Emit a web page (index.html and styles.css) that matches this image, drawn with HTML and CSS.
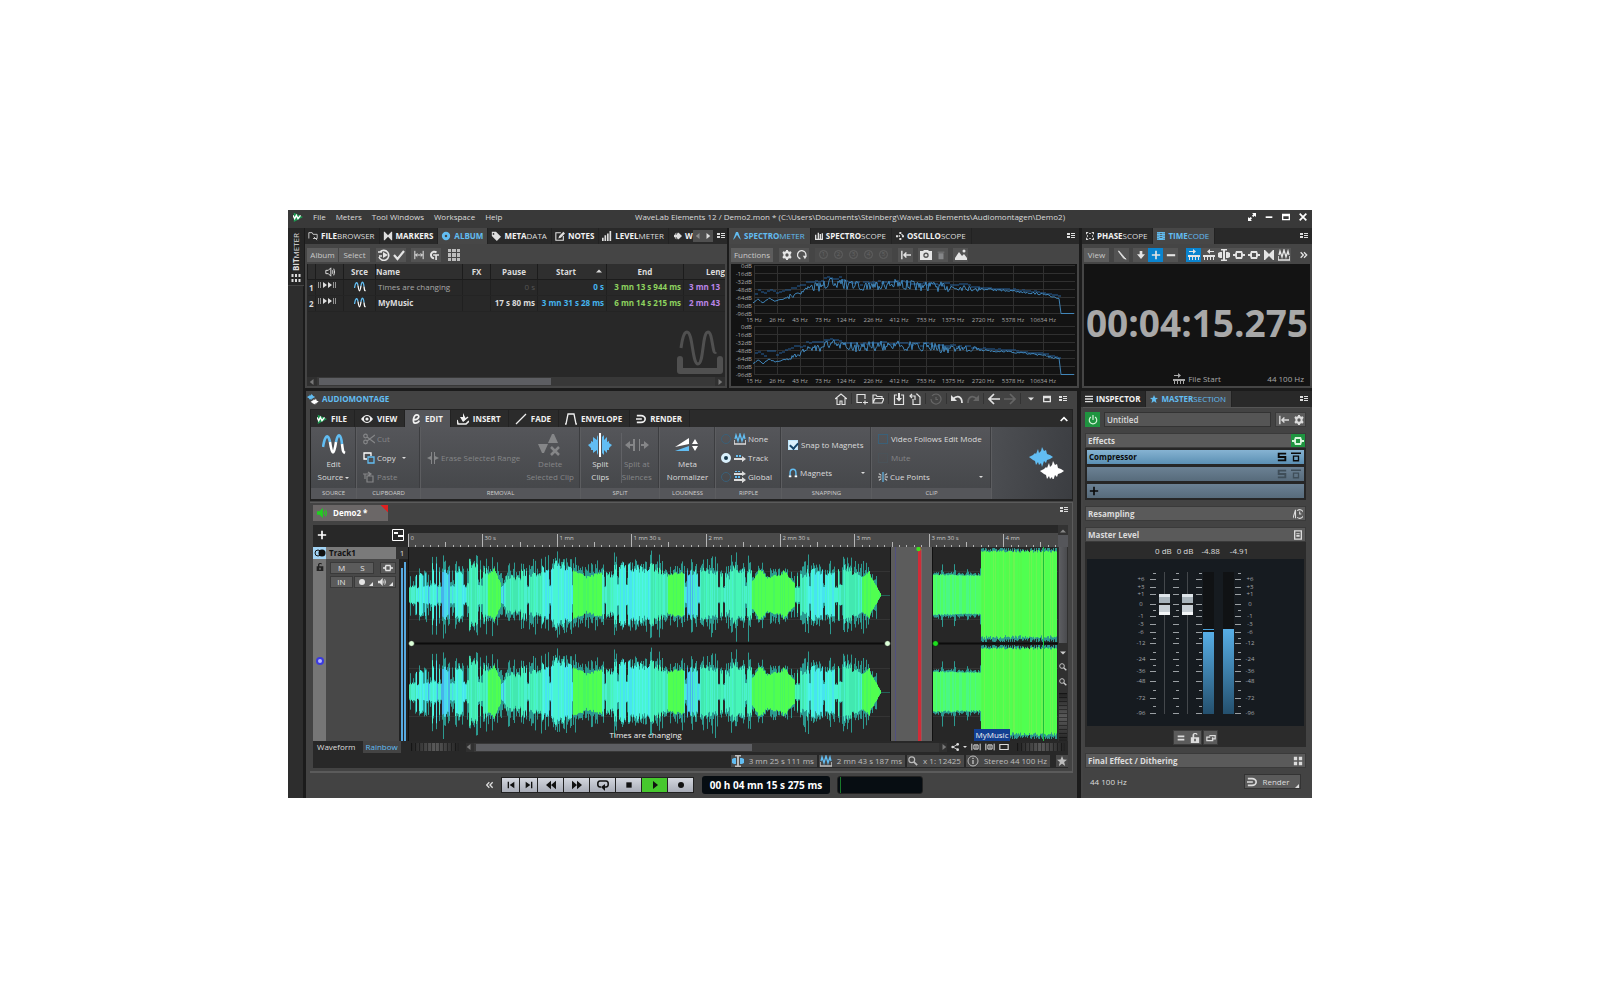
FILE: index.html
```html
<!DOCTYPE html>
<html lang="en">
<head>
<meta charset="utf-8">
<title>WaveLab Elements 12</title>
<link rel="stylesheet" href="styles.css">
</head>
<body>
<svg class="sprite" aria-hidden="true">
  <symbol id="logo" viewBox="0 0 12 12"><path d="M1 1l11 5-11 6z" fill="#1c9a50"/><path d="M0 4l2 4 2-4 2 4 3-4" fill="none" stroke="#fff" stroke-width="1.6"/></symbol>
  <symbol id="grid9" viewBox="0 0 12 12"><path d="M0 0h3v3H0zM4 0h4v3H4zM9 0h3v3H9zM0 4h3v4H0zM4 4h4v4H4zM9 4h3v4H9zM0 9h3v3H0zM4 9h4v3H4zM9 9h3v3H9z" opacity=".75"/></symbol>
  <symbol id="grid6" viewBox="0 0 9 10"><path d="M0 1h2v3H0zM3.500 1h2v3h-2zM7 1h2v3H7zM0 6h2v3H0zM3.500 6h2v3h-2zM7 6h2v3H7z"/></symbol>
  <symbol id="folder" viewBox="0 0 12 12"><path d="M1 9V2h4l1 2h5v5H6M7 7l4 4" fill="none" stroke="currentColor"/></symbol>
  <symbol id="bow" viewBox="0 0 12 12"><path d="M1 1h1l4 4 4-4h1v10h-1L6 7l-4 4H1z"/></symbol>
  <symbol id="disc" viewBox="0 0 12 12"><path fill-rule="evenodd" d="M6 1a5 5 0 110 10A5 5 0 016 1zm0 3.500a1.500 1.500 0 100 3 1.500 1.500 0 000-3z"/></symbol>
  <symbol id="tag" viewBox="0 0 12 12"><path fill-rule="evenodd" d="M1 1h5l6 6-5 5-6-6zM3 2.500a1 1 0 100 2 1 1 0 000-2z"/></symbol>
  <symbol id="note" viewBox="0 0 12 12"><path d="M7 2H1v9h9V6" fill="none" stroke="currentColor" stroke-width="1.300"/><path d="M4 9l1-3 5-5 2 2-5 5z"/></symbol>
  <symbol id="bars" viewBox="0 0 12 12"><path d="M0 8h2v4H0zM3 5h2v7H3zM6 3h2v9H6zM9 0h2v12H9z"/></symbol>
  <symbol id="pulse" viewBox="0 0 12 12"><path d="M0 4h2V2h1v2h1V1h1v2l1-2h1l5 5-5 5H6L5 9v2H4V8H3v2H2V8H0z"/></symbol>
  <symbol id="list" viewBox="0 0 8 8"><path d="M0 1h3v2H0zM0 4h3v2H0zM4 1h4v1H4zM4 3h4v1H4zM4 5h4v1H4z"/></symbol>
  <symbol id="left" viewBox="0 0 8 8"><path d="M6 0v8L1 4z"/></symbol>
  <symbol id="right" viewBox="0 0 8 8"><path d="M2 0v8l5-4z"/></symbol>
  <symbol id="up" viewBox="0 0 8 8"><path d="M0 6h8L4 2z"/></symbol>
  <symbol id="down" viewBox="0 0 8 8"><path d="M0 2h8L4 6z"/></symbol>
  <symbol id="peak" viewBox="0 0 12 12"><path d="M0 12L4.500 0h3L12 12l-3-3L6 4 3 9z"/></symbol>
  <symbol id="scope" viewBox="0 0 12 12"><path d="M0 4h2v6h2V1h2v9h1V3h2v7h1V2h2v10H0z"/></symbol>
  <symbol id="dots" viewBox="0 0 12 12"><path d="M5 0h3v3H5zM0 5h3v3H0zM4 5h2v2H4zM9 5h3v3H9zM5 9h3v3H5zM8 3h2v2H8z"/></symbol>
  <symbol id="gear" viewBox="0 0 12 12"><path fill-rule="evenodd" d="M5 0h2l.5 1.500L9 2.200l1.500-.6 1 1.800L10.300 5v2l1.200 1.500-1 1.800L9 9.800l-1.500.8L7 12H5l-.5-1.400L3 9.800l-1.500.5-1-1.800L1.700 7V5L.5 3.400l1-1.800 1.500.6 1.500-.7zm1 4a2 2 0 100 4 2 2 0 000-4z"/></symbol>
  <symbol id="loop" viewBox="0 0 12 12"><path d="M4 10.500A5 5 0 1110.500 7" fill="none" stroke="currentColor" stroke-width="1.600"/><path d="M7 7h5l-2.500 4z"/></symbol>
  <symbol id="tostart" viewBox="0 0 12 12"><path d="M1 1v10M3 6h9M6.500 3l-3 3 3 3" fill="none" stroke="currentColor" stroke-width="1.700"/></symbol>
  <symbol id="camera" viewBox="0 0 12 12"><path fill-rule="evenodd" d="M0 2h3l1-1h4l1 1h3v9H0zM6 3.500a2.700 2.700 0 100 5.400 2.700 2.700 0 000-5.400z"/><circle cx="6" cy="6.200" r="1.300"/></symbol>
  <symbol id="trash" viewBox="0 0 12 12"><path d="M2 2h8v1H2zM3 4h6v7H3z"/></symbol>
  <symbol id="image" viewBox="0 0 12 12"><path d="M0 11V9l4-6 3 4 2-2 3 4v2z"/><circle cx="9" cy="2" r="1.500"/></symbol>
  <symbol id="phase" viewBox="0 0 12 12"><path d="M0 0h4L0 4zM12 0v4L8 0zM0 12V8l4 4zM12 12H8l4-4zM1 6l2-2v4zM11 6L9 4v4zM6 1L4 3h4zM6 11l2-2H4z"/></symbol>
  <symbol id="film" viewBox="0 0 12 12"><path fill-rule="evenodd" d="M0 0h12v12H0zM1 1v2h1V1zM1 5v2h1V5zM1 9v2h1V9zM10 1v2h1V1zM10 5v2h1V5zM10 9v2h1V9zM4 2v1h4V2zM4 5v1h4V5zM4 8v1h4V8z"/></symbol>
  <symbol id="burger" viewBox="0 0 12 12"><path d="M0 1h12v2H0zM0 5h12v2H0zM0 9h12v2H0z"/></symbol>
  <symbol id="star" viewBox="0 0 12 12"><path d="M6 0l1.700 4.200 4.300.2-3.400 2.800L9.800 12 6 9.200 2.200 12l1.200-4.800L0 4.400l4.300-.2z"/></symbol>
  <symbol id="play-rel" viewBox="0 0 12 12"><path d="M0 3h4M1 7h3M2 3a5 5 0 11-1 5" fill="none" stroke="currentColor" stroke-width="1.600"/><path d="M5 3l5 3-5 3z"/></symbol>
  <symbol id="check" viewBox="0 0 12 12"><path d="M1 6l3.500 4L11 2" fill="none" stroke="currentColor" stroke-width="2.200"/></symbol>
  <symbol id="span" viewBox="0 0 12 12"><path d="M1 1v10M11 1v10M2 6h8M4 4L2 6l2 2M8 4l2 2-2 2" fill="none" stroke="currentColor" stroke-width="1.200"/></symbol>
  <symbol id="ct" viewBox="0 0 12 12"><path d="M9 3a4 4 0 10-3 7" fill="none" stroke="currentColor" stroke-width="2.400"/><path d="M5 5h7v2h-2.500v5h-2V7H5z"/></symbol>
  <symbol id="speaker" viewBox="0 0 12 12"><path d="M1 4h3l3-3v10L4 8H1zM9 4q1 2 0 4M10.500 2q2 4 0 8" fill="none" stroke="currentColor" stroke-width="1.200"/></symbol>
  <symbol id="playcell" viewBox="0 0 18 6"><path d="M0 0h1v6H0zM2 0h1v6H2zM15 0h1v6h-1zM17 0h1v6h-1z" opacity=".6"/><path d="M5 0l4 3-4 3zM10 0l4 3-4 3z"/></symbol>
  <symbol id="sine" viewBox="0 0 24 20"><path d="M1 12C3 0 6-2 8 7" fill="none" stroke="#62bdf2" stroke-width="2.600"/><path d="M8 7c2 14 4 14 6 0" fill="none" stroke="#fff" stroke-width="2.600"/><path d="M14 7c2-10 5-8 6 2" fill="none" stroke="#62bdf2" stroke-width="2.600"/><path d="M20 9c1 8 1 8 3 9" fill="none" stroke="#fff" stroke-width="2.600"/></symbol>
  <symbol id="clip" viewBox="0 0 12 12"><path d="M0 7v4h12V7" fill="none" stroke="currentColor" stroke-width="1.600"/><path d="M1 6l1-4 2 6 2-7 2 7 2-6 1 4" fill="none" stroke="var(--accent, #62bdf2)" stroke-width="1.300"/></symbol>
  <symbol id="nodes" viewBox="0 0 12 12"><path fill-rule="evenodd" d="M0 5h2l1-3h6l1 3h2v2h-2l-1 3H3L2 7H0zM4 4v4h4V4z"/></symbol>
  <symbol id="plus" viewBox="0 0 12 12"><path d="M5 1h2v4h4v2H7v4H5V7H1V5h4z"/></symbol>
  <symbol id="minus" viewBox="0 0 12 12"><path d="M1 5h10v2.500H1z"/></symbol>
  <symbol id="arrowdown" viewBox="0 0 12 12"><path d="M4 0h4v5h4l-6 7-6-7h4z"/></symbol>
  <symbol id="pen" viewBox="0 0 12 12"><path d="M2 1l7 8 2 2-3-1-6-8z" stroke="currentColor"/></symbol>
  <symbol id="rail" viewBox="0 0 12 12"><path d="M0 6h12v2H0zM1 8h1v3H1zM4 8h1v3H4zM7 8h1v3H7zM10 8h1v3h-1zM1 2h4V0l3 2.500L5 5V3H1z"/></symbol>
  <symbol id="caret" viewBox="0 0 12 12"><path d="M3 0h6v1.500H7v9h2V12H3v-1.500h2v-9H3z"/><path fill="var(--accent, #62bdf2)" d="M0 4l2-1h2v6H2L0 8zM12 4l-2-1H8v6h2l2-1z"/></symbol>
  <symbol id="duo" viewBox="0 0 36 32"><path fill="#62bdf2" d="M0 10l4-2 2-2 1 1 2-5 1 4 2-2 1-4 2 4 2-1 1 4 3 1 3 2-3 2-3 1-1 3-2-2-2 6-1-4-2 2-1-3-2 3-1-4-2-1z"/><path fill="#fff" d="M11 24l4-2 2-2 1 1 2-5 1 4 2-2 1-4 2 4 2-1 1 4 3 1 3 2-3 2-3 1-1 3-2-2-2 6-1-4-2 2-1-3-2 3-1-4-2-1z"/></symbol>
  <symbol id="home" viewBox="0 0 12 12"><path d="M0 6l6-5 6 5M2 5v6.500h3V8h2v3.500h3V5" fill="none" stroke="currentColor" stroke-width="1.100"/></symbol>
  <symbol id="new" viewBox="0 0 12 12"><path d="M6 9.500H1v-8h8V6M9 7.500v4M7 9.500h5" fill="none" stroke="currentColor" stroke-width="1.200"/></symbol>
  <symbol id="open" viewBox="0 0 12 12"><path d="M1 10V2h3l1 1.500h5V5M1 10l2-4.500h9L10 10z" fill="none" stroke="currentColor" stroke-width="1.200"/></symbol>
  <symbol id="save" viewBox="0 0 12 12"><path d="M4 2H1.500v9.500h9V2H8" fill="none" stroke="currentColor" stroke-width="1.200"/><path d="M5 0h2v5h2L6 8.500 3 5h2z"/></symbol>
  <symbol id="revert" viewBox="0 0 12 12"><path d="M4 6v5.500h7V4L8 1H7M6 7V3H1M3 1L1 3l2 2" fill="none" stroke="currentColor" stroke-width="1.200"/></symbol>
  <symbol id="clock" viewBox="0 0 12 12"><path d="M2 3a5 5 0 11-1 3M6 4v2.500h2" fill="none" stroke="currentColor" stroke-width="1.200"/></symbol>
  <symbol id="undo" viewBox="0 0 12 12"><path d="M2 6c4-4 9-3 9 4" fill="none" stroke="currentColor" stroke-width="1.800"/><path d="M0 2v6h6z"/></symbol>
  <symbol id="redo" viewBox="0 0 12 12"><path d="M10 6C6 2 1 3 1 10" fill="none" stroke="currentColor" stroke-width="1.800"/><path d="M12 2v6H6z"/></symbol>
  <symbol id="back" viewBox="0 0 12 12"><path d="M12 6H1M6 1L1 6l5 5" fill="none" stroke="currentColor" stroke-width="1.700"/></symbol>
  <symbol id="fwd" viewBox="0 0 12 12"><path d="M0 6h11M6 1l5 5-5 5" fill="none" stroke="currentColor" stroke-width="1.700"/></symbol>
  <symbol id="win" viewBox="0 0 12 12"><path fill-rule="evenodd" d="M0 1h12v10H0zM2 5v4h8V5z"/></symbol>
  <symbol id="cross" viewBox="0 0 12 12"><path d="M1 1l10 10M11 1L1 11" fill="none" stroke="currentColor" stroke-width="2.600"/></symbol>
  <symbol id="expand" viewBox="0 0 12 12"><path d="M6 0h6v6L10 4 8 6 6 4l2-2zM6 12H0V6l2 2 2-2 2 2-2 2z"/></symbol>
  <symbol id="eye" viewBox="0 0 12 12"><path fill-rule="evenodd" d="M0 6q6-8 12 0-6 8-12 0zM6 3a3 3 0 100 6 3 3 0 000-6z"/><circle cx="6" cy="6" r="1.600"/></symbol>
  <symbol id="edit" viewBox="0 0 12 12"><path d="M3 7c7 0 8-6 4-6C3 1 1 11 5 11c2 0 4-1 5-3" fill="none" stroke="currentColor" stroke-width="2"/></symbol>
  <symbol id="insert" viewBox="0 0 12 12"><path d="M0 7l1 4h8l3-3M6 8l5-4" fill="none" stroke="currentColor" stroke-width="1.600"/><path d="M6 0v4H3l3 5 3-3z"/></symbol>
  <symbol id="fade" viewBox="0 0 12 12"><path d="M1 11L11 1" stroke="currentColor" stroke-width="1.300"/></symbol>
  <symbol id="env" viewBox="0 0 12 12"><path d="M0 11h1L3 1h6l2 10h1" fill="none" stroke="currentColor" stroke-width="1.300"/></symbol>
  <symbol id="render" viewBox="0 0 12 12"><path d="M1 2h5c3 0 5 2 5 4s-2 4-5 4H1M0 6h7" fill="none" stroke="currentColor" stroke-width="2"/></symbol>
  <symbol id="cut" viewBox="0 0 12 12"><path d="M4 4l8 6M4 8l8-6" stroke="currentColor" stroke-width="1.200"/><g fill="none" stroke="currentColor" stroke-width="1.200"><circle cx="2.500" cy="3" r="1.800"/><circle cx="2.500" cy="9" r="1.800"/></g></symbol>
  <symbol id="copy" viewBox="0 0 12 12"><path d="M4 7H1V1h7v3" fill="none" stroke="#fff" stroke-width="1.300"/><path d="M5 5h6v6H5z" fill="none" stroke="#62bdf2" stroke-width="1.300"/></symbol>
  <symbol id="paste" viewBox="0 0 12 12"><path d="M4 5h6v6H4zM2 8V3h5M5 1l3 2-3 2M0 3h3" fill="none" stroke="currentColor" stroke-width="1.200"/></symbol>
  <symbol id="erase" viewBox="0 0 12 12"><path d="M5 0v12H4V8L0 6l4-2V0zM7 0v12h1V8l4-2-4-2V0z"/></symbol>
  <symbol id="delete" viewBox="0 0 24 24"><path d="M10 10l4-9h2l4 9zM0 11h10l-4 9H4z"/><path d="M13 14l8 8M21 14l-8 8" stroke="currentColor" stroke-width="2.500"/></symbol>
  <symbol id="split" viewBox="0 0 24 24"><path fill="#62bdf2" d="M0 12l3-2V8l2 1V4l4 3V2l1 2v16l-1 2v-5l-4 3v-3l-2 0v-2zM24 12l-3-2V8l-2 1V4l-3 3V2l-2 2v16l2 2v-5l3 3v-3l2 0v-2z"/><path d="M11 0h2v24h-2z" fill="#fff"/></symbol>
  <symbol id="splitsil" viewBox="0 0 24 12"><path d="M8 0h2v12H8zM14 0h1v12h-1zM0 6l5-4v8zM5 5h3v2H5zM24 6l-5-4v8zM16 5h3v2h-3z"/></symbol>
  <symbol id="meta" viewBox="0 0 24 16"><path d="M0 10L14 1v6z" fill="#fff"/><path d="M0 14l14-5v5z" fill="#62bdf2"/><path d="M17 7l3-5 3 5zM17 9h6l-3 5z" fill="#fff"/></symbol>
  <symbol id="track" viewBox="0 0 12 12"><path d="M0 6h8V4l4 3-4 3V8H0z"/><path d="M2 3h2v2H2zM5 3h2v2H5z" fill="#62bdf2"/></symbol>
  <symbol id="global" viewBox="0 0 12 12"><path d="M0 2h8V0l4 3-4 2V4H0zM0 8h8V6l4 3-4 3v-2H0z"/><path d="M1 0h2v1H1zM4 0h2v1H4zM1 5h2v2H1zM4 5h2v2H4z" fill="#62bdf2"/></symbol>
  <symbol id="magnet" viewBox="0 0 12 12"><path d="M2.500 10V6c0-6 7-6 7 0v4" fill="none" stroke="#62bdf2" stroke-width="1.700"/><path d="M1 9h3v2H1zM8 9h3v2H8z" fill="#fff"/></symbol>
  <symbol id="cue" viewBox="0 0 12 12"><path d="M5.300 0h1.400v12H5.300z" fill="#62bdf2"/><path d="M0 6h4M8 6h4M1 2l3 2M1 10l3-2M11 2L8 4M11 10L8 8" stroke="currentColor" stroke-width="1.300"/></symbol>
  <symbol id="sound" viewBox="0 0 12 12"><path d="M0 4h3l4-4v12L3 8H0z"/><path d="M8.500 4q1 2 0 4M10 2q2.500 4 0 8" fill="none" stroke="currentColor" stroke-width="1.300"/></symbol>
  <symbol id="layout" viewBox="0 0 12 12"><path d="M.5.500h11v11H.5z" fill="none" stroke="currentColor"/><path d="M2 3h4v2H2zM6 6h5v2H6z"/></symbol>
  <symbol id="unlock" viewBox="0 0 12 12"><path fill-rule="evenodd" d="M1 5h2V3c0-4 6-4 6-1H7.500C7 1 5 1 5 3v2h6v7H1zM5 7v3h2V7z"/></symbol>
  <symbol id="link" viewBox="0 0 12 10"><path d="M4 2h7v4H7M8 4v4H1V4h4" fill="none" stroke="currentColor" stroke-width="1.500"/></symbol>
  <symbol id="mag" viewBox="0 0 12 12"><circle cx="4.500" cy="4.500" r="3.500" fill="none" stroke="currentColor" stroke-width="1.400"/><path d="M7 7l4 4" stroke="currentColor" stroke-width="2"/></symbol>
  <symbol id="info" viewBox="0 0 12 12"><circle cx="6" cy="6" r="5" fill="none" stroke="currentColor"/><path d="M5.300 5h1.400v4H5.300zM5.300 2.700h1.400v1.400H5.300z"/></symbol>
  <symbol id="share" viewBox="0 0 12 12"><path d="M10 2L3 6l7 4" fill="none" stroke="currentColor" stroke-width="1.300"/><circle cx="10" cy="2" r="2"/><circle cx="2.500" cy="6" r="2"/><circle cx="10" cy="10" r="2"/></symbol>
  <symbol id="box" viewBox="0 0 12 12"><path d="M1 3h10v6H1z" fill="none" stroke="currentColor" stroke-width="1.400"/></symbol>
  <symbol id="boxes" viewBox="0 0 12 12"><path d="M1 2v8M11 2v8M3.500 3.500h5v5h-5zM6 4v4" fill="none" stroke="currentColor" stroke-width="1.200"/></symbol>
  <symbol id="power" viewBox="0 0 12 12"><path d="M3.500 2.500a4.500 4.500 0 105 0M6 0v6" fill="none" stroke="currentColor" stroke-width="1.400"/></symbol>
  <symbol id="solo" viewBox="0 0 12 12"><path d="M11 2H2v4h8v4H1" fill="none" stroke="currentColor" stroke-width="2.200"/></symbol>
  <symbol id="bypass" viewBox="0 0 12 12"><path d="M0 1.500h12M3 5h6v5.500H3z" fill="none" stroke="currentColor" stroke-width="1.600"/></symbol>
  <symbol id="resample" viewBox="0 0 12 12"><path d="M0 11L3 1v10M5 2a5 5 0 110 8M8 3v3h2" fill="none" stroke="currentColor" stroke-width="1.300"/></symbol>
  <symbol id="fader" viewBox="0 0 12 12"><path d="M2 1h8v10H2z" fill="none" stroke="currentColor" stroke-width="1.600"/><path d="M4 4h4v1H4zM4 6h4v2H4z"/></symbol>
  <symbol id="equals" viewBox="0 0 12 12"><path d="M2 3h8v2H2zM2 7h8v2H2z"/></symbol>
  <symbol id="grid4" viewBox="0 0 12 12"><path d="M1 1h4v4H1zM7 1h4v4H7zM1 7h4v4H1zM7 7h4v4H7z"/></symbol>
  <symbol id="prev" viewBox="0 0 12 12"><path d="M1 1h2v10H1zM11 1v10L4 6z"/></symbol>
  <symbol id="next" viewBox="0 0 12 12"><path d="M9 1h2v10H9zM1 1v10l7-5z"/></symbol>
  <symbol id="rew" viewBox="0 0 12 12"><path d="M6 1v10L0 6zM12 1v10L6 6z"/></symbol>
  <symbol id="ff" viewBox="0 0 12 12"><path d="M0 1v10l6-5zM6 1v10l6-5z"/></symbol>
  <symbol id="cycle" viewBox="0 0 12 12"><path d="M4 8H3C0 8 0 2 3 2h6c3 0 3 6 0 6H7" fill="none" stroke="currentColor" stroke-width="1.500"/><path d="M8 5v7L4 8z"/></symbol>
  <symbol id="stop" viewBox="0 0 12 12"><path d="M2 2h8v8H2z"/></symbol>
  <symbol id="dot" viewBox="0 0 12 12"><circle cx="6" cy="6" r="4.500"/></symbol>
  <symbol id="corner" viewBox="0 0 6 6"><path d="M6 0v6H0z"/></symbol>
  <symbol id="more" viewBox="0 0 12 12"><path d="M1 2l4 4-4 4M6 2l4 4-4 4" fill="none" stroke="currentColor" stroke-width="2"/></symbol>
  <symbol id="less" viewBox="0 0 12 12"><path d="M5 2L1 6l4 4M10 2L6 6l4 4" fill="none" stroke="currentColor" stroke-width="2"/></symbol>
  <symbol id="foldup" viewBox="0 0 12 12"><path d="M1 9l5-5 5 5" fill="none" stroke="#fff" stroke-width="2.500"/></symbol>
  <symbol id="ticks" viewBox="0 0 6 142"><path d="M0 7.500h6M0 15.500h6M0 22.500h6M0 32.500h6M0 44.500h6M0 52.500h6M0 60.500h6M0 71.500h6M0 87.500h6M0 99.500h6M0 109.500h6M0 126.500h6M0 141.500h6M3 1.500h3M3 38.500h3M3 66.500h3M3 80.500h3M3 93.500h3M3 118.500h3M3 134.500h3" stroke="#9a9fa3"/></symbol>
</svg>

<main class="stage">
<div class="window">
  <header class="titlebar">
    <svg class="i i10"><use href="#logo"/></svg>
    <nav class="menus"><button>File</button><button>Meters</button><button>Tool Windows</button><button>Workspace</button><button>Help</button></nav>
    <h1>WaveLab Elements 12 / Demo2.mon * (C:\Users\Documents\Steinberg\WaveLab Elements\Audiomontagen\Demo2)</h1>
    <div class="winbtns">
      <button aria-label="Full screen"><svg class="i i8"><use href="#expand"/></svg></button>
      <button aria-label="Minimize"><svg class="i i8"><use href="#minus"/></svg></button>
      <button aria-label="Maximize"><svg class="i i8"><use href="#win"/></svg></button>
      <button aria-label="Close"><svg class="i i8"><use href="#cross"/></svg></button>
    </div>
  </header>

  <aside class="siderail"><button class="railtab"><span><b>BIT</b>METER</span><svg class="i i10"><use href="#grid6"/></svg></button></aside>

  <div class="top">
    <section class="panel album">
      <div class="tabs">
        <button><svg class="i i10"><use href="#folder"/></svg><b>FILE</b>BROWSER</button>
        <button><svg class="i i10"><use href="#bow"/></svg><b>MARKERS</b></button>
        <button class="on"><svg class="i i10"><use href="#disc"/></svg><b>ALBUM</b></button>
        <button><svg class="i i10"><use href="#tag"/></svg><b>META</b>DATA</button>
        <button><svg class="i i10"><use href="#note"/></svg><b>NOTES</b></button>
        <button><svg class="i i10"><use href="#bars"/></svg><b>LEVEL</b>METER</button>
        <button class="cutoff"><svg class="i i8"><use href="#pulse"/></svg><b>W</b></button>
        <span class="scrollers"><button aria-label="Previous tabs" class="dim"><svg class="i i6"><use href="#left"/></svg></button><button aria-label="Next tabs"><svg class="i i6"><use href="#right"/></svg></button></span>
        <button class="pmenu" aria-label="Panel menu"><svg class="i i8"><use href="#list"/></svg></button>
      </div>
      <div class="toolbar">
        <div class="grp"><button class="txt">Album</button><button class="txt">Select</button></div>
        <div class="grp"><button aria-label="Sync"><svg class="i"><use href="#play-rel"/></svg></button><button aria-label="Validate"><svg class="i"><use href="#check"/></svg></button></div>
        <div class="grp"><button aria-label="Span"><svg class="i i10"><use href="#span"/></svg></button><button aria-label="CD text"><svg class="i i10"><use href="#ct"/></svg></button></div>
        <div class="grp bare"><button aria-label="Columns"><svg class="i"><use href="#grid9"/></svg></button></div>
      </div>
      <div class="tracks">
        <table>
          <colgroup><col class="c-num"><col class="c-spk"><col class="c-src"><col class="c-name"><col class="c-fx"><col class="c-pause"><col class="c-start"><col class="c-end"><col class="c-len"></colgroup>
          <thead><tr><th></th><th><svg class="i i10"><use href="#speaker"/></svg></th><th>Srce</th><th class="l">Name</th><th>FX</th><th>Pause</th><th class="sort">Start<svg class="i i6"><use href="#up"/></svg></th><th>End</th><th>Length</th></tr></thead>
          <tbody>
            <tr><td class="n">1</td><td><svg class="playcell"><use href="#playcell"/></svg></td><td class="c"><svg class="i"><use href="#sine"/></svg></td><td class="soft">Times are changing</td><td></td><td class="r faint">0 s</td><td class="r blue">0 s</td><td class="r green">3 mn 13 s 944 ms</td><td class="violet">3 mn 13</td></tr>
            <tr><td class="n">2</td><td><svg class="playcell"><use href="#playcell"/></svg></td><td class="c"><svg class="i"><use href="#sine"/></svg></td><td>MyMusic</td><td></td><td class="r">17 s 80 ms</td><td class="r blue">3 mn 31 s 28 ms</td><td class="r green">6 mn 14 s 215 ms</td><td class="violet">2 mn 43</td></tr>
          </tbody>
        </table>
        <svg class="watermark" viewBox="0 0 46 44"><path d="M4 18C6 4 8 2 10 2c6 0 5 32 11 32S25 2 31 2c5 0 4 24 8 20" fill="none" stroke="#505050" stroke-width="3"/><path d="M3 29v12h40V29" fill="none" stroke="#505050" stroke-width="6" stroke-linejoin="round" stroke-linecap="round"/></svg>
        <div class="hscroll"><svg class="i i6"><use href="#left"/></svg><div class="track"><i class="thumb albumthumb"></i></div><svg class="i i6"><use href="#right"/></svg></div>
      </div>
    </section>

    <section class="panel spectro">
      <div class="tabs">
        <button class="on"><svg class="i i8"><use href="#peak"/></svg><b>SPECTRO</b>METER</button>
        <button><svg class="i i8"><use href="#scope"/></svg><b>SPECTRO</b>SCOPE</button>
        <button><svg class="i i8"><use href="#dots"/></svg><b>OSCILLO</b>SCOPE</button>
        <button class="pmenu" aria-label="Panel menu"><svg class="i i8"><use href="#list"/></svg></button>
      </div>
      <div class="toolbar">
        <div class="grp"><button class="txt wide">Functions</button></div>
        <div class="grp"><button aria-label="Settings"><svg class="i i10"><use href="#gear"/></svg></button><button aria-label="Reset"><svg class="i i10"><use href="#loop"/></svg></button></div>
        <div class="grp presets"><button disabled>1</button><button disabled>2</button><button disabled>3</button><button disabled>4</button><button disabled>5</button></div>
        <div class="grp"><button aria-label="Back to start"><svg class="i i10"><use href="#tostart"/></svg></button></div>
        <div class="grp"><button aria-label="Snapshot"><svg class="i"><use href="#camera"/></svg></button><button disabled aria-label="Delete snapshot"><svg class="i i10"><use href="#trash"/></svg></button></div>
        <div class="grp"><button aria-label="Image"><svg class="i"><use href="#image"/></svg></button></div>
      </div>
      <svg id="spectrum" class="spectrum" viewBox="0 0 346 122" role="img" aria-label="Spectrum"></svg>
    </section>
  </div>

  <section class="panel timecode">
    <div class="tabs">
      <button><svg class="i i8"><use href="#phase"/></svg><b>PHASE</b>SCOPE</button>
      <button class="on"><svg class="i i8"><use href="#film"/></svg><b>TIME</b>CODE</button>
      <button class="pmenu" aria-label="Panel menu"><svg class="i i8"><use href="#list"/></svg></button>
    </div>
    <div class="toolbar">
      <div class="grp"><button class="txt view">View</button></div>
      <div class="grp"><button aria-label="Pen"><svg class="i i10"><use href="#pen"/></svg></button></div>
      <div class="grp"><button aria-label="Down"><svg class="i i8"><use href="#arrowdown"/></svg></button><button class="lit" aria-label="Plus"><svg class="i i10"><use href="#plus"/></svg></button><button aria-label="Minus"><svg class="i i10"><use href="#minus"/></svg></button></div>
      <div class="grp mono"><button class="lit" aria-label="File start"><svg class="i"><use href="#rail"/></svg></button><button aria-label="File end"><svg class="i flip"><use href="#rail"/></svg></button><button aria-label="Cursor"><svg class="i"><use href="#caret"/></svg></button><button aria-label="Clip start"><svg class="i"><use href="#nodes"/></svg></button><button aria-label="Clip end"><svg class="i"><use href="#nodes"/></svg></button><button aria-label="Marker"><svg class="i"><use href="#bow"/></svg></button><button aria-label="Clip"><svg class="i"><use href="#clip"/></svg></button></div>
      <svg class="i i8 end"><use href="#more"/></svg>
    </div>
    <div class="clockface">
      <output class="bigtime">00:04:15.275</output>
      <div class="clockfoot"><span></span><span class="with-icon"><svg class="i"><use href="#rail"/></svg>File Start</span><span class="rate">44 100 Hz</span></div>
    </div>
  </section>

  <section class="montage">
    <div class="mhead">
      <svg class="i"><use href="#duo"/></svg><h2>AUDIOMONTAGE</h2>
      <div class="tools">
        <button aria-label="Home"><svg class="i"><use href="#home"/></svg></button><i></i>
        <button aria-label="New"><svg class="i"><use href="#new"/></svg></button><button aria-label="Open"><svg class="i"><use href="#open"/></svg></button><i></i>
        <button aria-label="Save"><svg class="i"><use href="#save"/></svg></button><button aria-label="Revert"><svg class="i"><use href="#revert"/></svg></button><i></i>
        <button disabled aria-label="History"><svg class="i"><use href="#clock"/></svg></button><i></i>
        <button aria-label="Undo"><svg class="i"><use href="#undo"/></svg></button><button disabled aria-label="Redo"><svg class="i"><use href="#redo"/></svg></button><i></i>
        <button aria-label="Back"><svg class="i"><use href="#back"/></svg></button><button disabled aria-label="Forward"><svg class="i"><use href="#fwd"/></svg></button><i></i>
        <button aria-label="More"><svg class="i i6"><use href="#down"/></svg></button><button aria-label="Window"><svg class="i i8"><use href="#win"/></svg></button><button aria-label="Menu"><svg class="i i8"><use href="#list"/></svg></button>
      </div>
    </div>

    <div class="ribbon">
      <div class="rtabs">
        <button><svg class="i i10"><use href="#logo"/></svg>FILE</button>
        <button><svg class="i"><use href="#eye"/></svg>VIEW</button>
        <button class="on"><svg class="i i10"><use href="#edit"/></svg>EDIT</button>
        <button><svg class="i"><use href="#insert"/></svg>INSERT</button>
        <button><svg class="i"><use href="#fade"/></svg>FADE</button>
        <button><svg class="i"><use href="#env"/></svg>ENVELOPE</button>
        <button><svg class="i i10"><use href="#render"/></svg>RENDER</button>
        <button class="fold" aria-label="Collapse"><svg class="i i8"><use href="#foldup"/></svg></button>
      </div>
      <div class="groups">
        <fieldset class="g g-source"><div class="gb"><button class="big"><svg class="i i24"><use href="#sine"/></svg>Edit<br>Source <svg class="i i4 drop"><use href="#down"/></svg></button></div><legend>SOURCE</legend></fieldset>
        <fieldset class="g g-clip"><div class="gb col"><button disabled><svg class="i"><use href="#cut"/></svg>Cut</button><button><svg class="i"><use href="#copy"/></svg>Copy<svg class="i i4"><use href="#down"/></svg></button><button disabled><svg class="i"><use href="#paste"/></svg>Paste</button></div><legend>CLIPBOARD</legend></fieldset>
        <fieldset class="g g-rem"><div class="gb"><button disabled><svg class="i"><use href="#erase"/></svg>Erase Selected Range</button><button class="big" disabled><svg class="i i24"><use href="#delete"/></svg>Delete<br>Selected Clip</button></div><legend>REMOVAL</legend></fieldset>
        <fieldset class="g g-split"><div class="gb"><button class="big"><svg class="i i24"><use href="#split"/></svg>Split<br>Clips</button><button class="big rule" disabled><svg class="i i24"><use href="#splitsil"/></svg>Split at<br>Silences</button></div><legend>SPLIT</legend></fieldset>
        <fieldset class="g g-loud"><div class="gb"><button class="big"><svg class="i i24"><use href="#meta"/></svg>Meta<br>Normalizer</button></div><legend>LOUDNESS</legend></fieldset>
        <fieldset class="g g-rip"><div class="gb col"><label><input type="radio" name="ripple"><svg class="i"><use href="#clip"/></svg>None</label><label><input type="radio" name="ripple" checked><svg class="i"><use href="#track"/></svg>Track</label><label><input type="radio" name="ripple"><svg class="i"><use href="#global"/></svg>Global</label></div><legend>RIPPLE</legend></fieldset>
        <fieldset class="g g-snap"><div class="gb col two"><label><input type="checkbox" checked>Snap to Magnets</label><button><svg class="i i10"><use href="#magnet"/></svg>Magnets<svg class="i i4 end"><use href="#down"/></svg></button></div><legend>SNAPPING</legend></fieldset>
        <fieldset class="g g-cue"><div class="gb col"><label><input type="checkbox">Video Follows Edit Mode</label><label class="off"><input type="checkbox" disabled>Mute</label><button><svg class="i i10"><use href="#cue"/></svg>Cue Points<svg class="i i4 end"><use href="#down"/></svg></button></div><legend>CLIP</legend></fieldset>
        <div class="brand"><svg><use href="#duo"/></svg></div>
      </div>
    </div>

    <div class="editor">
      <div class="files"><button class="file"><svg class="i i10"><use href="#sound"/></svg>Demo2 *</button><button class="pmenu" aria-label="Menu"><svg class="i i8"><use href="#list"/></svg></button></div>
      <div class="work">
        <div class="corner"><button aria-label="Add track"><svg class="i i10"><use href="#plus"/></svg></button><button aria-label="Track layout"><svg class="i"><use href="#layout"/></svg></button></div>
        <svg id="ruler" class="ruler" viewBox="0 0 650 14"></svg>
        <div class="vtop"><svg class="i i6"><use href="#up"/></svg></div>

        <div class="thead">
          <div class="tname"><span class="tog"><svg viewBox="0 0 12 8"><circle cx="4" cy="4" r="3" fill="none" stroke="#111"/><circle cx="8" cy="4" r="3.500" fill="#111"/></svg></span><b>Track1</b><span class="tno">1</span></div>
          <div class="tbody">
            <div class="tside"><svg class="i i8"><use href="#unlock"/></svg><span class="knob"></span></div>
            <div class="tctl">
              <div><span class="pair"><button>M</button><button>S</button></span><span class="pair"><button aria-label="Effects"><svg class="i i10"><use href="#nodes"/></svg></button></span></div>
              <div><span class="pair"><button>IN</button></span><span class="pair"><button aria-label="Record"><svg class="i i8"><use href="#dot"/></svg></button><svg class="i i4"><use href="#corner"/></svg><button aria-label="Monitor"><svg class="i i8"><use href="#sound"/></svg></button><svg class="i i4"><use href="#corner"/></svg></span></div>
            </div>
            <div class="tmeter"><i></i><i></i></div>
          </div>
        </div>
        <div class="lane">
          <svg id="wave" viewBox="0 0 650 194" preserveAspectRatio="none" role="img" aria-label="Waveform"></svg>
          <span class="clipname first">Times are changing</span><span class="clipname second">MyMusic</span>
        </div>
        <div class="vbar"><i class="vthumb"></i><svg class="i i6"><use href="#down"/></svg><svg class="i i8"><use href="#mag"/></svg><svg class="i i8"><use href="#mag"/></svg><span class="jog v"></span></div>

        <div class="lower">
          <button>Waveform</button><button class="on">Rainbow</button><span class="jog"></span>
          <div class="hscroll"><svg class="i i6"><use href="#left"/></svg><div class="track"><i class="thumb wavethumb"></i></div><svg class="i i6"><use href="#right"/></svg></div>
          <svg class="i i8"><use href="#share"/></svg><svg class="i i4"><use href="#down"/></svg><svg class="i i10"><use href="#boxes"/></svg><svg class="i i10"><use href="#boxes"/></svg><svg class="i i10"><use href="#box"/></svg><span class="jog last"></span>
        </div>
      </div>
      <div class="status">
        <span><svg class="i"><use href="#caret"/></svg>3 mn 25 s 111 ms</span><span><svg class="i"><use href="#clip"/></svg>2 mn 43 s 187 ms</span><span><svg class="i i10"><use href="#mag"/></svg>x 1: 12425</span><span><svg class="i"><use href="#info"/></svg>Stereo 44 100 Hz</span><button aria-label="Favorite"><svg class="i i10"><use href="#star"/></svg></button>
      </div>
    </div>

    <div class="transport">
      <svg class="i i8"><use href="#less"/></svg>
      <div class="keys">
        <button class="half" aria-label="Previous"><svg class="i i8"><use href="#prev"/></svg></button><button class="half" aria-label="Next"><svg class="i i8"><use href="#next"/></svg></button><button aria-label="Rewind"><svg class="i i10"><use href="#rew"/></svg></button><button aria-label="Forward"><svg class="i i10"><use href="#ff"/></svg></button><button aria-label="Loop"><svg class="i"><use href="#cycle"/></svg></button><button aria-label="Stop"><svg class="i i8"><use href="#stop"/></svg></button><button class="go" aria-label="Play"><svg class="i i8"><use href="#right"/></svg></button><button aria-label="Record"><svg class="i i8"><use href="#dot"/></svg></button>
      </div>
      <output class="pos">00 h 04 mn 15 s 275 ms</output>
      <span class="lvl"></span>
    </div>
  </section>

  <section class="panel master">
    <div class="tabs">
      <button><svg class="i i8"><use href="#burger"/></svg><b>INSPECTOR</b></button>
      <button class="on"><svg class="i i8"><use href="#star"/></svg><b>MASTER</b>SECTION</button>
      <button class="pmenu" aria-label="Panel menu"><svg class="i i8"><use href="#list"/></svg></button>
    </div>
    <div class="mbody">
      <div class="preset"><button class="pwr" aria-label="Power"><svg class="i i10"><use href="#power"/></svg></button><button class="pname">Untitled</button><span class="pair"><button aria-label="Reset"><svg class="i i10"><use href="#tostart"/></svg></button><button aria-label="Settings"><svg class="i i10"><use href="#gear"/></svg></button></span></div>
      <div class="effects">
        <div class="bar">Effects<button class="fxon" aria-label="Effects on"><svg class="i"><use href="#nodes"/></svg></button></div>
        <ul>
          <li class="hot">Compressor<span><svg class="i i10"><use href="#solo"/></svg><svg class="i i10"><use href="#bypass"/></svg></span></li>
          <li><span class="ghost"><svg class="i i10"><use href="#solo"/></svg><svg class="i i10"><use href="#bypass"/></svg></span></li>
          <li><svg class="i i10"><use href="#plus"/></svg></li>
        </ul>
      </div>
      <div class="bar">Resampling<svg class="i i10"><use href="#resample"/></svg></div>
      <div class="levels">
        <div class="bar">Master Level<svg class="i i10"><use href="#fader"/></svg></div>
        <div class="dbs"><span>0 dB</span><span>0 dB</span><span>-4.88</span><span>-4.91</span></div>
        <div class="mixer">
          <svg class="scale" viewBox="0 0 12 142"></svg>
          <svg class="tk"><use href="#ticks"/></svg>
          <input type="range" value="82" aria-label="Left level">
          <svg class="tk"><use href="#ticks"/></svg>
          <input type="range" value="82" aria-label="Right level">
          <svg class="tk"><use href="#ticks"/></svg>
          <span class="vu"></span><span class="vu two"></span>
          <svg class="tk"><use href="#ticks"/></svg>
          <svg class="scale" viewBox="0 0 12 142"></svg>
        </div>
        <div class="lockrow"><span class="pair"><button aria-label="Equal"><svg class="i i10"><use href="#equals"/></svg></button><button aria-label="Unlock"><svg class="i i10"><use href="#unlock"/></svg></button></span><span class="pair"><button aria-label="Link"><svg class="i i10"><use href="#link"/></svg></button></span></div>
      </div>
      <div class="bar">Final Effect / Dithering<svg class="i i10"><use href="#grid4"/></svg></div>
      <div class="mfoot"><span>44 100 Hz</span><button><svg class="i i10"><use href="#render"/></svg>Render<svg class="i i4 tri"><use href="#corner"/></svg></button></div>
    </div>
  </section>
</div>
</main>
<script src="script.js"></script>
</body>
</html>
```
FILE: styles.css
```css
* { box-sizing: border-box; }
body { margin: 0; background: #fff; font: 8px/12px "Open Sans", "Noto Sans", sans-serif; color: #dcdcdc; }
button { appearance: none; border: 0; margin: 0; padding: 0; background: none; font: inherit; color: inherit; display: flex; align-items: center; justify-content: center; gap: 3px; white-space: nowrap; }
button:disabled, .off { color: #858688; }
h1, h2 { margin: 0; font-size: 8px; font-weight: 400; }
fieldset { border: 0; margin: 0; padding: 0; min-width: 0; }
.sprite { position: absolute; width: 0; height: 0; }
svg { display: block; flex: none; }
.i { width: 12px; height: 12px; fill: currentColor; }
.i10 { width: 10px; height: 10px; }
.i8 { width: 8px; height: 8px; }
.i6 { width: 6px; height: 6px; }
.i4 { width: 4px; height: 4px; }
.i24 { width: 24px; height: 24px; }
.flip { transform: scaleX(-1); }
.end { margin-left: auto; }

.stage { padding: 210px 18% 0; }
.window { display: grid; grid-template-columns: 16px minmax(0, 1fr) 233px; grid-template-rows: auto auto auto; background: #1b1b1b; }
.titlebar { grid-column: 1 / -1; display: grid; grid-template-columns: 10px 1fr auto 232px; align-items: center; gap: 10px; height: 18px; padding: 0 5px 4px; background: #393939; }
.menus { display: flex; gap: 10px; }
.winbtns { display: flex; gap: 9px; justify-content: flex-end; color: #fff; }

.siderail { grid-row: span 2; background: #2d2d2d; border-right: 1px solid #1b1b1b; }
.railtab { width: 16px; height: 58px; flex-direction: column; gap: 2px; padding-top: 3px; border-bottom: 1px solid #444; background: #262626; }
.railtab span { writing-mode: vertical-rl; transform: rotate(180deg); line-height: 8px; }

.top { display: grid; grid-template-columns: minmax(0, 422fr) minmax(0, 350fr); gap: 2px; padding: 0 0 3px 1px; }
.panel { min-width: 0; background: #2a2a2a; border: solid #454545; border-width: 0 2px 2px; }
.tabs { display: flex; height: 16px; margin: 0 -2px; background: #292929; color: #dedede; }
.tabs button { gap: 0; padding: 0 5px 0 4px; border-right: 1px solid #222; }
.tabs .i { margin-right: 3px; }
.tabs .on { background: #474747; color: #62bdf2; }
.tabs b { color: #f2f2f2; }
.tabs .on b { color: #62bdf2; }
.scrollers { display: flex; margin: 2px 0; background: #505050; }
.album .tabs button { padding: 0 4px 0 3px; }
.album .tabs .cutoff { padding: 0 0 0 5px; border: 0; }
.tabs .scrollers button { width: 10px; padding: 0; border: 0; }
.scrollers .dim { color: #8a8a8a; }
.tabs .scrollers .i, .tabs .pmenu .i { margin: 0; }
.tabs .pmenu, .album .tabs .pmenu { margin-left: auto; padding: 0 4px; border: 0; }
.toolbar { display: flex; align-items: center; gap: 5px; height: 20px; padding-top: 1px; background: #454545; color: #e4e4e4; }
.grp { display: flex; height: 14px; background: #535353; }
.grp button { width: 15px; }
.grp .txt { width: 32px; background: #5c5c5c; border-right: 1px solid #454545; color: #c9c9c9; }
.grp .wide { width: 43px; }
.grp .view { width: 26px; }
.grp.bare { background: none; }
.presets { background: #4a4a4a; padding: 0 1px; margin: 0 1px; }
.presets button { width: 9px; height: 9px; margin: 2px 3px; border: 1px solid #606060; border-radius: 50%; font-size: 6px; color: #656565; }
.grp .lit { background: #0a84cf; }
.mono { --accent: currentColor; margin-left: 4px; }
.timecode .toolbar { padding-right: 0; gap: 4px; }
.timecode .end { margin-right: 2px; }

.tracks { position: relative; height: 122px; overflow: hidden; background: #282828; }
.tracks table { width: 419px; border-collapse: collapse; table-layout: fixed; font-weight: 700; }
.c-num { width: 8px; } .c-spk { width: 28px; } .c-src { width: 32px; } .c-name { width: 87px; } .c-fx { width: 28px; }
.c-pause { width: 47px; } .c-start { width: 69px; } .c-end { width: 77px; } .c-len { width: 43px; }
th, td { padding: 0; white-space: nowrap; overflow: hidden; border-right: 1px solid #202020; }
th { height: 15px; padding-top: 1px; background: #2f2f2f; border: 1px solid #1c1c1c; border-top: 0; font-weight: 700; position: relative; }
th:last-child { padding-left: 22px; }
th .i { margin: 0 auto; }
th.sort { padding-right: 12px; }
.sort .i { position: absolute; right: 4px; top: 4px; }
th.l { text-align: left; }
td { height: 16px; padding: 0 2px; border-bottom: 1px solid #242424; }
td.n { padding: 2px 0 0; text-align: center; }
td.r { text-align: right; }
td.c .i { margin: 0 auto; }
.playcell { width: 18px; height: 6px; margin-bottom: 4px; fill: #ddd; }
td.soft { color: #a9a9a9; font-weight: 400; }
td.faint { color: #555; font-weight: 400; }
.blue { color: #45b4ee; } .green { color: #8ed35f; } .violet { color: #bb86e8; }
td.violet { padding-left: 5px; }
.watermark { position: absolute; right: 2px; bottom: 12px; width: 46px; height: 44px; }
.hscroll { display: flex; align-items: center; flex: 1; height: 9px; background: #303030; color: #777; }
.tracks .hscroll { position: absolute; left: 0; right: 0; bottom: 0; padding: 0 2px; }
.track { flex: 1; height: 9px; padding: 1px 2px; margin: 0 2px; background: #383838; }
.thumb { display: block; height: 7px; background: #5d5e62; }
.albumthumb { width: 59%; }
.wavethumb { width: 60%; }

.spectrum { width: 100%; background: #131313; }
.spectrum text { font-size: 6px; fill: #a8a8a8; }
.clockface { display: flex; flex-direction: column; height: 122px; background: #131313; }
.bigtime { flex: 1; padding-top: 37px; font-size: 37px; line-height: 44px; font-weight: 700; color: #a8a8a8; text-align: center; }
.clockfoot { display: grid; grid-template-columns: 1fr auto 1fr; gap: 5px; padding: 0 6px; color: #a8a8a8; height: 13px; }
.rate { text-align: right; }
.with-icon { display: flex; gap: 3px; }
.timecode { margin: 0 0 3px 3px; }

.montage { min-width: 0; margin: 0 2px; padding: 0 4px; background: #434343; }
.mhead { display: flex; align-items: center; gap: 3px; height: 18px; padding-bottom: 3px; margin-left: -3px; color: #62bdf2; }
.mhead h2 { font-weight: 700; }
.tools { display: flex; align-items: center; gap: 4px; margin-left: auto; margin-right: 4px; color: #e2e2e2; }
.tools > i { width: 1px; height: 11px; background: #333; }
.tools button:nth-last-child(-n+3) { width: 12px; }
.tools button:disabled { color: #666; }
.ribbon { border: 1px solid #222; border-bottom-width: 2px; }
.rtabs { display: flex; height: 17px; background: #2b2b2b; color: #f0f0f0; font-weight: 700; }
.rtabs button { gap: 4px; padding: 0 7px 0 6px; border-right: 1px solid #222; }
.rtabs .on { background: #55565a; }
.rtabs .fold { margin-left: auto; border: 0; padding: 0 4px; }
.groups { display: flex; background: linear-gradient(#55565a, #434548); }
.g { display: flex; flex-direction: column; border-right: 1px solid #5c5d60; box-shadow: inset -1px 0 #3c3d40; }
.g legend { order: 2; float: left; width: 100%; height: 11px; padding: 0; background: #55565a; color: #cfcfcf; font-size: 6px; line-height: 10px; text-align: center; }
.gb { display: flex; height: 61px; padding: 6px 3px 5px; justify-content: space-around; align-items: center; }
.gb.col { flex-direction: column; align-items: stretch; justify-content: space-between; }
.gb.two { padding: 12px 6px 9px; }
.gb button, .gb label { gap: 2px; justify-content: flex-start; }
.gb label { display: flex; align-items: center; white-space: nowrap; }
.gb .big { display: block; align-self: stretch; line-height: 13px; text-align: center; }
.big .i { margin: 0 auto; }
.big .drop { display: inline-block; }
.rule { border-left: 1px solid #616266; }
.g-source { width: 46px; } .g-clip { width: 64px; } .g-rem { width: 160px; } .g-split { width: 79px; }
.g-loud { width: 56px; } .g-rip { width: 66px; } .g-snap { width: 90px; } .g-cue { width: 120px; }
.g-clip .gb { padding-left: 6px; }
.g-rip .gb { padding-left: 5px; }
.g-cue .gb { padding: 6px 8px 5px 6px; }
.g-clip .i4 { margin-left: 4px; }
.brand { flex: 1; display: flex; align-items: center; justify-content: flex-end; padding-right: 7px; background: linear-gradient(100deg, #4d4f53, #3b3d41); }
.brand svg { width: 36px; height: 32px; }
input[type=radio], input[type=checkbox] { appearance: none; flex: none; width: 10px; height: 10px; margin: 0 1px 0 0; border: 1px solid #3a6078; }
input[type=radio] { border-radius: 50%; }
input[type=radio]:checked { border: 3px solid #d9f0fc; background: #17384c; }
input[type=checkbox]:checked { border: 1px solid #bfe6fb; background: #d9f0fc; }
input[type=checkbox]:checked::after { content: ""; display: block; width: 4px; height: 6px; margin-left: 2px; border: solid #16466a; border-width: 0 2px 2px 0; transform: rotate(42deg); }
.gb input:disabled { border-color: #4a5258; }

.editor { margin-top: 1px; padding: 2px 4px 3px 3px; border: solid #5b5b5b; border-width: 1px 1px 2px 0; background: #434343; }
.files { display: flex; justify-content: space-between; height: 20px; padding-bottom: 4px; }
.file { width: 75px; justify-content: flex-start; padding-left: 4px; gap: 6px; font-weight: 700; color: #fff; background: linear-gradient(225deg, #d22 5px, #6b6767 5px); }
.file .i { color: #20d020; }
.files .pmenu { align-self: flex-start; padding-top: 1px; }
.work { display: grid; grid-template-columns: 95px minmax(0, 1fr) 10px; background: #282828; }
.corner { display: flex; justify-content: space-between; align-items: center; height: 22px; padding: 0 4px; color: #fff; }
.corner button { padding-bottom: 2px; }
.ruler { width: 100%; align-self: end; background: #4a4a4a; }
.ruler text { font-size: 6px; fill: #ccc; }
.vtop { display: flex; justify-content: center; padding-top: 3px; color: #888; background: linear-gradient(#333 10px, #55565a 10px); }
.thead { display: flex; flex-direction: column; }
.tname { display: flex; height: 12px; line-height: 12px; background: #7a7a7a; color: #111; }
.tog { width: 13px; padding: 2px 0 0 1px; background: #a3d4f5; }
.tog svg { width: 12px; height: 8px; }
.tname b { padding-left: 3px; flex: 1; }
.tno { width: 12px; background: #333; color: #ddd; text-align: center; }
.tbody { display: flex; flex: 1; background: #484848; }
.tside { display: flex; flex-direction: column; justify-content: space-between; align-items: center; width: 13px; padding: 4px 0 76px; background: #767676; color: #222; }
.knob { width: 8px; height: 8px; border: 2px solid #3a3ae0; border-radius: 50%; background: #b5b5ff; }
.tctl { flex: 1; padding: 3px 3px 0 4px; color: #e4e4e4; }
.tctl > div { display: flex; justify-content: space-between; margin-bottom: 2px; }
.pair { display: flex; align-items: center; background: #5b5b5b; border: 1px solid #3a3a3a; }
.tctl .pair { height: 12px; }
.tctl button { width: 14px; }
.tctl .pair:first-child button { width: 21px; }
.tctl .i4 { align-self: flex-end; margin: 0 2px 1px 0; }
.tmeter { display: flex; gap: 1px; width: 9px; padding: 3px 2px 0; background: #222; }
.tmeter i { width: 3px; background: #57a8df; }
.tmeter i:first-child { margin-top: 6px; }
.lane { position: relative; }
.lane > svg { width: 100%; height: 194px; }
.clipname { position: absolute; bottom: 0; color: #f2f2f2; }
.first { left: 31%; }
.second { left: 87%; padding: 0 2px; background: #123f92; }
.vbar { display: flex; flex-direction: column; align-items: center; gap: 7px; background: #303030; color: #ccc; }
.vthumb { width: 8px; height: 96px; background: linear-gradient(90deg, #5d5e62, #4a4b4e); }
.jog { width: 48px; height: 8px; margin: 0 3px 0 6px; background: repeating-linear-gradient(90deg, #0006 0 1px, #0000 1px 4px), linear-gradient(90deg, #222, #5a5a5a, #222); }
.jog.v { width: 8px; height: 48px; margin: 0; background: repeating-linear-gradient(#0006 0 1px, #0000 1px 4px), linear-gradient(#222, #5a5a5a, #222); }
.jog.last { margin-left: 4px; }
.lower { grid-column: 1 / -1; display: flex; align-items: center; gap: 4px; height: 12px; color: #ddd; }
.lower button { padding: 0 3px; margin-left: 1px; }
.lower button.on { margin: 0; background: #444; color: #62bdf2; }
.status { display: flex; justify-content: flex-end; gap: 2px; height: 15px; padding: 2px 0 1px; background: #282828; color: #bdbdbd; }
.status > * { display: flex; align-items: center; gap: 5px; padding: 0 3px 0 1px; background: #484848; }
.status button { margin-left: 4px; padding: 0 1px; }

.transport { display: flex; align-items: center; justify-content: center; gap: 7px; height: 25px; padding: 0 0 2px 26px; }
.keys { display: flex; gap: 1px; height: 16px; margin-right: 1px; color: #111; border: 1px solid #222; background: #222; }
.keys button { width: 25px; background: linear-gradient(#d3d6de, #a9adb8); }
.keys .half { width: 17px; }
.keys .go { background: #46c82e; }
.pos { width: 128px; height: 18px; border-radius: 3px; background: #070d12; font-size: 10px; line-height: 18px; font-weight: 700; text-align: center; color: #fff; }
.lvl { width: 86px; height: 18px; border: 1px solid #222; border-radius: 3px; background: linear-gradient(90deg, #070d12 2px, #19782a 2px 3px, #070d12 3px); }

.master { margin-left: 2px; background: #434343; }
.mbody { display: flex; flex-direction: column; gap: 6px; padding: 4px 4px 4px 2px; border-top: 1px solid #555; }
.preset { display: flex; gap: 4px; height: 15px; }
.pwr, .fxon { width: 15px; height: 15px; background: #1f9440; color: #d8f5dc; }
.pname { flex: 1; justify-content: flex-start; padding-left: 2px; border: 1px solid #333; background: #555; font-weight: 600; }
.preset .pair { width: 31px; gap: 5px; padding: 0 3px; justify-content: space-between; }
.bar { display: flex; justify-content: space-between; align-items: center; height: 15px; padding: 0 2px; border: 1px solid #3a3a3a; background: #5a5a5a; font-weight: 700; }
.fxon { width: 14px; height: 13px; margin-right: -2px; }
.effects { background: #262626; }
.effects ul { display: grid; gap: 3px; margin: 0; padding: 2px 2px 2px; list-style: none; }
.effects li { display: flex; align-items: center; justify-content: space-between; height: 14px; padding: 0 3px 0 2px; background: linear-gradient(#6b8194, #576b7b); color: #0a0a0a; font-weight: 700; }
.effects li span { display: flex; gap: 4px; margin-left: auto; }
.effects .hot { background: linear-gradient(#86b3d2, #5b8fb3); }
.effects li .ghost { color: #3f4e59; }
.levels { background: #2b2b2b; }
.dbs { display: flex; gap: 5px; padding: 3px 0 2px 70px; }
.dbs span:nth-child(n+3) { margin-left: 3px; }
.dbs span:last-child { margin-left: 5px; }
.mixer { display: flex; justify-content: center; gap: 3px; height: 167px; margin: 0 2px; padding-top: 13px; background: #161b20; }
.scale { width: 12px; height: 142px; overflow: visible; }
.scale text { font-size: 6px; fill: #a5a9ad; text-anchor: middle; }
.tk { width: 6px; height: 142px; }
.mixer input { appearance: none; writing-mode: vertical-lr; direction: rtl; width: 11px; height: 142px; margin: 0; background: linear-gradient(90deg, #0000 5px, #44484c 5px 6px, #0000 6px); }
.mixer input::-webkit-slider-thumb { appearance: none; width: 11px; height: 21px; background: linear-gradient(#dfe5ea 0 3px, #a9b4bc 3px 9px, #222 9px 11px, #c9d0d6 11px 18px, #f4f6f8 18px); }
.vu { width: 11px; height: 142px; margin-left: -2px; background: linear-gradient(#101214 57px, #4ba3dc 57px 58px, #111 58px 60px, #57aee6 60px, #24506e); }
.vu.two { margin-left: 6px; margin-right: -2px; background: linear-gradient(#101214 57px, #57aee6 57px, #24506e); }
.lockrow { display: flex; justify-content: center; gap: 1px; padding: 4px 0 2px; }
.lockrow .pair { height: 15px; gap: 4px; padding: 0 1px 0 2px; }
.mfoot { display: flex; justify-content: space-between; align-items: center; height: 15px; padding: 0 5px; }
.mfoot button { width: 57px; height: 15px; justify-content: space-between; padding: 0 1px 0 2px; border: 1px solid #333; background: #5a5a5a; }
.tri { align-self: flex-end; }
```
FILE: script.js
```js
// Repeatable pseudo-random source, so that the demo signal never changes.
let seed = 7;
const rnd = () => (seed = (seed * 16807) % 2147483647) / 2147483647;

// Meter scale captions.
const scale = [["+6", 7], ["+3", 15], ["+1", 22], ["0", 32], ["-1", 44], ["-3", 52], ["-6", 60], ["-12", 71], ["-24", 87], ["-36", 99], ["-48", 109], ["-72", 126], ["-96", 141]];
for (const s of document.querySelectorAll(".scale"))
  s.innerHTML = scale.map(([t, y]) => `<text x="6" y="${y + 2}">${t}</text>`).join("");

// Time ruler.
const times = ["0", "30 s", "1 mn", "1 mn 30 s", "2 mn", "2 mn 30 s", "3 mn", "3 mn 30 s", "4 mn"];
let r = "";
for (let k = 0; k < 88; k++) {
  const x = Math.round(k * 7.44) + 0.5;
  const h = k % 10 === 0 ? 13 : k % 5 === 0 ? 5 : 2;
  r += `<path d="M${x} 14v${-h}" stroke="#b5b5b5"/>`;
  if (k % 10 === 0) r += `<text x="${x + 2}" y="7">${times[k / 10]}</text>`;
}
document.getElementById("ruler").innerHTML = r;

// Spectrum: two channels.
const freqs = [["15 Hz", 23], ["26 Hz", 46], ["43 Hz", 69], ["73 Hz", 92], ["124 Hz", 115], ["226 Hz", 142], ["412 Hz", 168], ["753 Hz", 195], ["1375 Hz", 222], ["2720 Hz", 252], ["5378 Hz", 282], ["10634 Hz", 312]];
const curve = [[22, 38], [27, 34], [32, 38], [38, 33], [44, 36], [52, 34], [60, 31], [69, 28], [76, 22], [86, 22], [98, 18], [110, 19], [125, 21], [145, 20], [165, 19], [190, 21], [215, 22], [250, 24], [282, 26], [310, 29], [328, 33]];
const at = (pts, x) => {
  let i = 1;
  while (i < pts.length - 1 && pts[i][0] < x) i++;
  const [a, b] = [pts[i - 1], pts[i]];
  return a[1] + (b[1] - a[1]) * Math.min(1, Math.max(0, (x - a[0]) / (b[0] - a[0])));
};
let sp = "";
for (const top of [1, 62]) {
  for (let i = 0; i < 7; i++) {
    const y = top + i * 8 + 0.5;
    sp += `<path d="M23 ${y}H344" stroke="#303030"/><text x="21" y="${y + 2}" text-anchor="end">${i ? -16 * i : 0}dB</text>`;
  }
  for (const [t, x] of freqs)
    sp += `<path d="M${x}.5 ${top}v49" stroke="#303030"/><text x="${x}" y="${top + 57}" text-anchor="middle">${t}</text>`;
  let line = "", dash = "";
  for (let x = 22; x <= 328; x++) {
    const n = x < 55 ? 1 : x < 80 ? 5 : x < 220 ? 10 : x < 250 ? 6 : 2;
    const y = at(curve, x);
    line += `${x === 22 ? "M" : "L"}${x} ${(top + y + (rnd() - 0.5) * n).toFixed(1)}`;
    if (x % 3 === 0) dash += `M${x} ${Math.round(top + y - (x < 70 ? 7 : x < 110 ? 4 : 1) - rnd() * (x < 240 ? 3 : 1))}h3`;
  }
  sp += `<path d="${dash}" stroke="#27619b" fill="none"/><path d="${line}L330 ${top + 48}.5H343" stroke="#438fc7" fill="none" stroke-width=".9"/>`;
}
document.getElementById("spectrum").innerHTML = sp;

// Rainbow waveform. Each entry: start, end, height at start, height at end, hue family.
const C = { t: ["#46f5b8", "#4af0cf", "#42e8b0"], c: ["#4ef2ea", "#46e4f0", "#48f5d2"], b: ["#46b4ea", "#4ad8f0", "#48ecdc", "#48f0cc"], g: ["#50ff50", "#50ff50", "#48f860"] };
const parts = [
  [1, 8, 8, 9, "t"], [8, 20, 18, 27, "c"], [20, 24, 9, 9, "b"], [24, 29, 29, 29, "c"], [29, 43, 22, 24, "b"], [43, 47, 9, 8, "b"], [47, 55, 27, 20, "c"], [55, 59, 9, 9, "c"],
  [59, 80, 33, 23, "t"], [80, 86, 22, 26, "g"], [86, 93, 26, 10, "g"], [93, 98, 9, 12, "b"], [98, 113, 18, 17, "t"], [113, 134, 23, 20, "t"], [134, 144, 26, 24, "c"], [144, 165, 31, 27, "c"],
  [165, 178, 26, 18, "g"], [178, 194, 18, 23, "g"], [194, 206, 23, 19, "t"], [206, 242, 30, 25, "c"], [242, 260, 29, 20, "t"], [260, 276, 21, 23, "g"], [276, 292, 23, 22, "b"], [292, 322, 25, 18, "t"], [322, 344, 27, 24, "t"],
  [344, 352, 14, 27, "g"], [352, 359, 27, 16, "g"], [359, 375, 17, 22, "g"], [375, 387, 25, 11, "g"], [387, 399, 20, 20, "t"], [399, 430, 25, 20, "c"], [430, 454, 29, 20, "t"], [454, 462, 18, 24, "g"], [462, 473, 20, 0, "g"],
  [525, 573, 21, 20, "q"], [573, 649, 45, 45, "f"]
];
const paths = {};
const put = (c, x, y1, y2) => { paths[c] = (paths[c] || "") + `M${x}.5 ${y1.toFixed(1)}V${y2.toFixed(1)}`; };
for (const [a, b, h1, h2, f] of parts) {
  let gap = 0;
  for (let x = a; x < b; x++) {
    const base = h1 + ((h2 - h1) * (x - a)) / (b - a);
    const smooth = f === "g", quiet = f === "q", full = f === "f";
    let h = base * (smooth ? 0.92 + rnd() * 0.12 : 0.84 + rnd() * 0.3);
    if (!smooth && !quiet && !full && base > 12 && gap <= 0 && rnd() < 0.1) gap = 2;
    if (gap-- > 0) h = base * 0.36;
    if (quiet || full) h = base * (0.94 + rnd() * 0.06);
    const spike = quiet ? (x % 13 < 2 ? 8 * rnd() + 3 : 3 * rnd()) : full ? 4 * rnd() : h > 8 ? rnd() * rnd() * 20 : h > 4 ? rnd() * 2 : 0;
    const set = quiet ? ["#4bf884", "#50ff62"] : full ? ["#50ff50", "#54fb4c", "#6bf552", "#50ff50"] : C[f];
    const col = set[Math.floor(rnd() * set.length)];
    for (const mid of [48, 145]) {
      const up = Math.min(47, h + spike), down = Math.min(47, h + spike * (0.5 + rnd()));
      put("#2c9a90", x, mid - up, mid + down);
      put(col, x, mid - h, mid + h * (0.94 + rnd() * 0.06));
    }
  }
}
let w = `<path d="M0 0h650v194H0z" fill="#272727"/><path d="M0 24.500h650M0 72.500h650M0 121.500h650M0 169.500h650" stroke="#343434"/>
  <path d="M0 48.500h482M0 145.500h482" stroke="#24615a"/><path d="M483 0h42v194h-42z" fill="#5c5c5c"/><path d="M487.500 0v194" stroke="#515080"/>`;
for (const c in paths) w += `<path d="${paths[c]}" stroke="${c}"/>`;
w += `<path d="M0 96.500h483M525 96.500h125" stroke="#0c0c0c" stroke-width="2"/><path d="M482.500 0v194M524.500 0v194M.5 0v194" stroke="#111"/>
  <path d="M635.500 0v194" stroke="#16c23c"/><path d="M511.500 0v194" stroke="#d02c38" stroke-width="3"/><path d="M513.500 2v192" stroke="#8c5a5c"/><circle cx="510.500" cy="2" r="2.200" fill="#3be020"/>
  <g stroke="#111" stroke-width=".5"><circle cx="3.500" cy="96.500" r="2.800" fill="#dcffd8"/><circle cx="479.500" cy="96.500" r="2.800" fill="#dcffd8"/><circle cx="527.500" cy="96.500" r="2.800" fill="#1ee01e"/></g>`;
document.getElementById("wave").innerHTML = w;
```
